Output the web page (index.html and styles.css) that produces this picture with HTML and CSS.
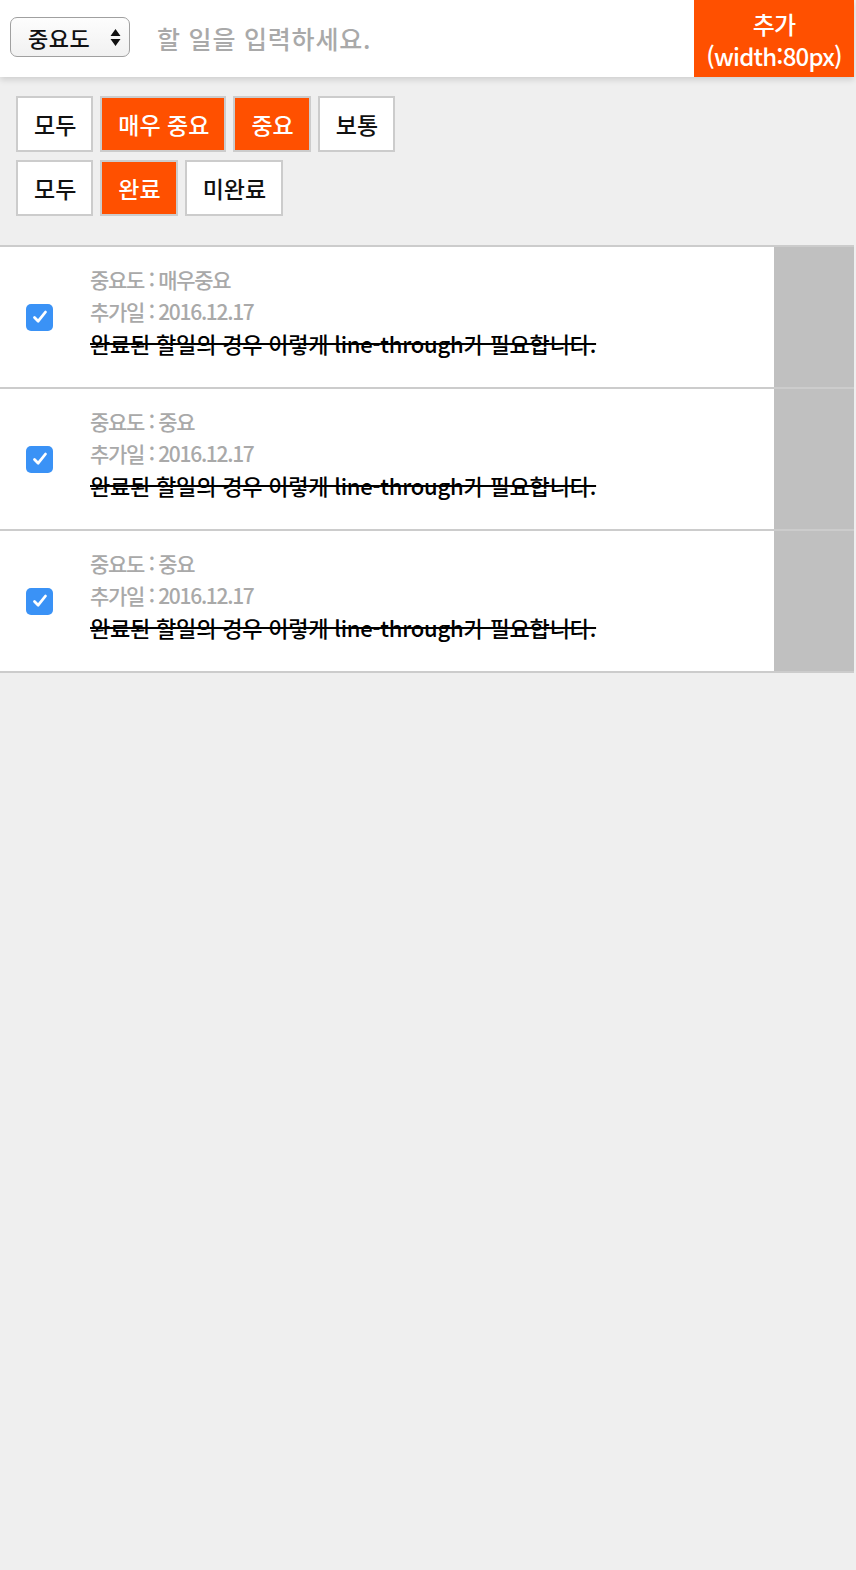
FILE: index.html
```html
<!DOCTYPE html>
<html lang="ko">
<head>
<meta charset="utf-8">
<title>할 일</title>
<link rel="stylesheet" href="styles.css">
</head>
<body>
<div class="page">
  <header class="header">
    <div class="select">
      <span class="select-label">중요도</span>
      <svg class="select-arrows" width="11" height="22" viewBox="0 0 11 22"><path d="M5.5 3 L10.5 10 L0.5 10 Z M5.5 20 L10.5 13 L0.5 13 Z" fill="#111"/></svg>
    </div>
    <div class="input">할 일을 입력하세요.</div>
    <button class="add">추가<br>(width:80px)</button>
  </header>

  <section class="filters">
    <div class="filter-row">
      <span class="fbtn">모두</span>
      <span class="fbtn on">매우 중요</span>
      <span class="fbtn on">중요</span>
      <span class="fbtn">보통</span>
    </div>
    <div class="filter-row">
      <span class="fbtn">모두</span>
      <span class="fbtn on">완료</span>
      <span class="fbtn">미완료</span>
    </div>
  </section>

  <ul class="list">
    <li class="item">
      <div class="check-col"><span class="check"><svg width="18" height="18" viewBox="0 0 18 18"><path d="M3.5 9.5 L7.2 13.2 L14.5 4" fill="none" stroke="#fff" stroke-width="2.8" stroke-linecap="round" stroke-linejoin="round"/></svg></span></div>
      <div class="body">
        <div class="meta">중요도 : 매우중요</div>
        <div class="meta">추가일 : 2016.12.17</div>
        <div class="title">완료된 할일의 경우 이렇게 line-through가 필요합니다.</div>
      </div>
      <div class="side"></div>
    </li>
    <li class="item">
      <div class="check-col"><span class="check"><svg width="18" height="18" viewBox="0 0 18 18"><path d="M3.5 9.5 L7.2 13.2 L14.5 4" fill="none" stroke="#fff" stroke-width="2.8" stroke-linecap="round" stroke-linejoin="round"/></svg></span></div>
      <div class="body">
        <div class="meta">중요도 : 중요</div>
        <div class="meta">추가일 : 2016.12.17</div>
        <div class="title">완료된 할일의 경우 이렇게 line-through가 필요합니다.</div>
      </div>
      <div class="side"></div>
    </li>
    <li class="item">
      <div class="check-col"><span class="check"><svg width="18" height="18" viewBox="0 0 18 18"><path d="M3.5 9.5 L7.2 13.2 L14.5 4" fill="none" stroke="#fff" stroke-width="2.8" stroke-linecap="round" stroke-linejoin="round"/></svg></span></div>
      <div class="body">
        <div class="meta">중요도 : 중요</div>
        <div class="meta">추가일 : 2016.12.17</div>
        <div class="title">완료된 할일의 경우 이렇게 line-through가 필요합니다.</div>
      </div>
      <div class="side"></div>
    </li>
  </ul>
</div>
</body>
</html>
```

FILE: styles.css
```css
* { box-sizing: border-box; }
html, body {
  margin: 0;
  padding: 0;
  background: #efefef;
  font-family: "Noto Sans CJK KR", "Noto Sans", sans-serif;
  font-weight: 500;
}
.page {
  width: 854px;
  min-height: 1570px;
  background: #efefef;
}
.header {
  display: flex;
  align-items: stretch;
  height: 77px;
  background: #fff;
  box-shadow: 0 3px 6px rgba(0, 0, 0, 0.13);
  position: relative;
}
.select {
  margin: 17px 0 0 10px;
  width: 120px;
  height: 40px;
  border: 1px solid #a0a0a0;
  border-radius: 7px;
  background: linear-gradient(#fdfdfd, #f1f1f1);
  display: flex;
  align-items: center;
  justify-content: space-between;
  padding: 0 8px 0 17px;
}
.select-label {
  font-size: 22px;
  color: #111;
  letter-spacing: 0.5px;
}
.input {
  flex: 1;
  padding: 0 0 0 27px;
  font-size: 25px;
  color: #a9a9a9;
  line-height: 76px;
  letter-spacing: 0.8px;
}
.add {
  width: 160px;
  border: 0;
  margin: 0;
  background: #ff5000;
  color: #fff;
  font-family: inherit;
  font-weight: 500;
  font-size: 24px;
  line-height: 32px;
  letter-spacing: -0.8px;
  padding: 2px 0 0;
}
.filters {
  padding: 19px 16px 29px;
  display: flex;
  flex-direction: column;
  gap: 8px;
}
.filter-row {
  display: flex;
  gap: 7px;
}
.fbtn {
  height: 56px;
  border: 2px solid #ccc;
  background: #fff;
  color: #111;
  font-size: 23px;
  letter-spacing: 0;
  padding: 0 15px 0 16px;
  display: flex;
  align-items: center;
}
.fbtn.on {
  background: #ff5000;
  color: #fff;
}
.list {
  list-style: none;
  margin: 0;
  padding: 0;
  border-top: 2px solid #ccc;
}
.item {
  display: flex;
  height: 142px;
  border-bottom: 2px solid #ccc;
  background: #fff;
}
.check-col {
  width: 90px;
  display: flex;
  align-items: center;
  padding-left: 26px;
}
.check {
  width: 27px;
  height: 27px;
  border-radius: 5px;
  background: #3a92f6;
  display: flex;
  align-items: center;
  justify-content: center;
}
.body {
  flex: 1;
  display: flex;
  flex-direction: column;
  justify-content: center;
  padding-bottom: 12px;
}
.meta, .title {
  line-height: 32px;
}
.meta {
  color: #a9a9a9;
  font-size: 21px;
  letter-spacing: -1.3px;
}
.title {
  color: #000;
  font-size: 22px;
  letter-spacing: -0.2px;
  text-decoration: line-through;
}
.side {
  width: 80px;
  background: #c0c0c0;
}
```
